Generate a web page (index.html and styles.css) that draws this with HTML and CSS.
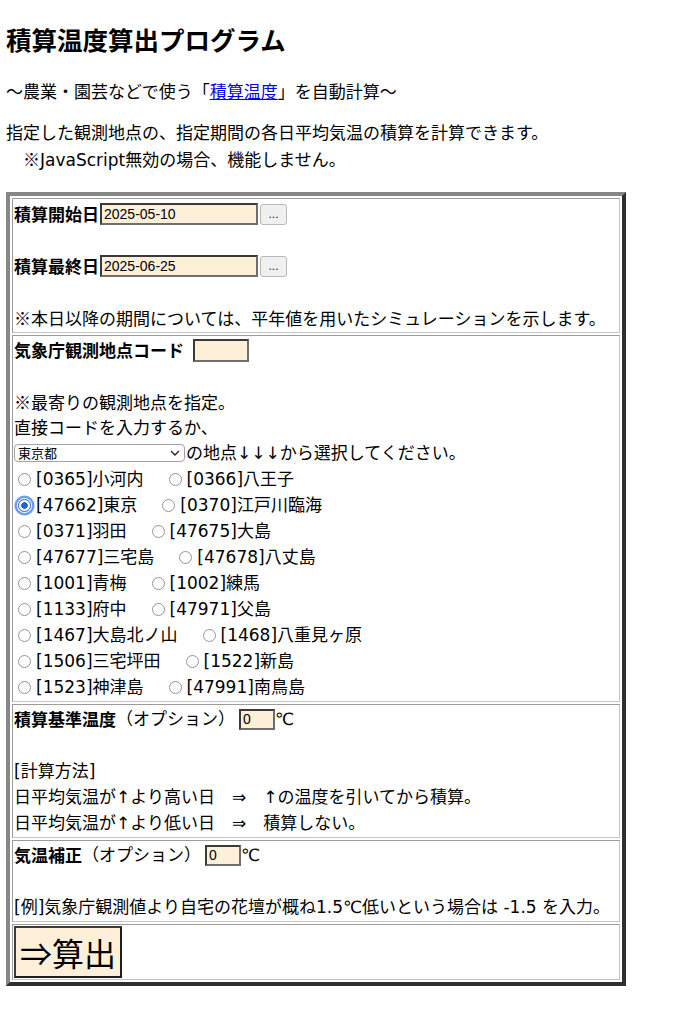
FILE: index.html
```html
<!DOCTYPE html>
<html lang="ja">
<head>
<meta charset="utf-8">
<title>積算温度算出プログラム</title>
<link rel="stylesheet" href="styles.css">
</head>
<body>
<h2 class="title">積算温度算出プログラム</h2>
<p class="sub">～農業・園芸などで使う「<a href="#">積算温度</a>」を自動計算～</p>
<p class="desc">指定した観測地点の、指定期間の各日平均気温の積算を計算できます。<br>　<span class="mark">※</span>JavaScript無効の場合、機能しません。</p>
<table class="calc">
<tr><td class="dates">
  <div class="ln"><b>積算開始日</b><input class="date" type="text" value="2025-05-10"><button class="pick" type="button">...</button></div>
  <div class="sp"></div>
  <div class="ln"><b>積算最終日</b><input class="date" type="text" value="2025-06-25"><button class="pick" type="button">...</button></div>
  <div class="sp"></div>
  <div class="tx"><span class="mark">※</span>本日以降の期間については、平年値を用いたシミュレーションを示します。</div>
</td></tr>
<tr><td>
  <div class="ln"><b>気象庁観測地点コード</b><input class="code" type="text" value=""></div>
  <div class="sp"></div>
  <div class="tx"><span class="mark">※</span>最寄りの観測地点を指定。</div>
  <div class="tx short">直接コードを入力するか、</div>
  <div class="ln"><span class="sel"><select class="pref"><option>東京都</option></select><svg class="chev" width="10" height="6" viewBox="0 0 10 6"><path d="M1 1l4 4 4-4" fill="none" stroke="#222" stroke-width="1.3"/></svg></span>の地点↓↓↓から選択してください。</div>
  <div class="opts"><label class="opt"><input type="radio" name="pt">[0365]小河内</label><label class="opt"><input type="radio" name="pt">[0366]八王子</label></div>
  <div class="opts"><label class="opt"><input type="radio" name="pt" checked class="focus">[47662]東京</label><label class="opt"><input type="radio" name="pt">[0370]江戸川臨海</label></div>
  <div class="opts"><label class="opt"><input type="radio" name="pt">[0371]羽田</label><label class="opt"><input type="radio" name="pt">[47675]大島</label></div>
  <div class="opts"><label class="opt"><input type="radio" name="pt">[47677]三宅島</label><label class="opt"><input type="radio" name="pt">[47678]八丈島</label></div>
  <div class="opts"><label class="opt"><input type="radio" name="pt">[1001]青梅</label><label class="opt"><input type="radio" name="pt">[1002]練馬</label></div>
  <div class="opts"><label class="opt"><input type="radio" name="pt">[1133]府中</label><label class="opt"><input type="radio" name="pt">[47971]父島</label></div>
  <div class="opts"><label class="opt"><input type="radio" name="pt">[1467]大島北ノ山</label><label class="opt"><input type="radio" name="pt">[1468]八重見ヶ原</label></div>
  <div class="opts"><label class="opt"><input type="radio" name="pt">[1506]三宅坪田</label><label class="opt"><input type="radio" name="pt">[1522]新島</label></div>
  <div class="opts"><label class="opt"><input type="radio" name="pt">[1523]神津島</label><label class="opt"><input type="radio" name="pt">[47991]南鳥島</label></div>
</td></tr>
<tr><td>
  <div class="ln"><b>積算基準温度</b>（オプション）<input class="num" type="text" value="0">℃</div>
  <div class="sp"></div>
  <div class="tx">[計算方法]</div>
  <div class="tx">日平均気温が↑より高い日　⇒　↑の温度を引いてから積算。</div>
  <div class="tx">日平均気温が↑より低い日　⇒　積算しない。</div>
</td></tr>
<tr><td>
  <div class="ln"><b>気温補正</b>（オプション）<input class="num" type="text" value="0">℃</div>
  <div class="sp"></div>
  <div class="tx">[例]気象庁観測値より自宅の花壇が概ね1.5℃低いという場合は -1.5 を入力。</div>
</td></tr>
<tr><td>
  <button class="go" type="button">⇒算出</button>
</td></tr>
</table>
</body>
</html>
```

FILE: styles.css
```css
html { background: #fff; }
body {
  margin: 8px 6px;
  font-family: "DejaVu Sans", "Noto Sans CJK JP", sans-serif;
  font-size: 17px;
  line-height: 26px;
  color: #000;
}
.title {
  font-family: "Noto Sans CJK JP", sans-serif;
  font-size: 25.5px;
  font-weight: bold;
  line-height: 37px;
  margin: 12px 0 22px;
}
.sub { margin: 0; }
.sub a { color: #0000ee; text-decoration: underline; }
.desc { margin: 15px 0 19px; }
.mark { font-family: "Noto Sans CJK JP", sans-serif; }
b { font-family: "Noto Sans CJK JP", sans-serif; font-weight: bold; }

.calc {
  width: 620px;
  border-collapse: separate;
  border-spacing: 2px;
  border: 4px solid;
  border-color: #878787 #2f2f2f #2f2f2f #878787;
}
.calc td {
  padding: 1px;
  vertical-align: top;
  border: 1px solid;
  border-color: #9c9c9c #c4c4c4 #c4c4c4 #9c9c9c;
  white-space: nowrap;
}
.calc td.dates { padding-top: 2px; }

.ln {
  display: flex;
  align-items: center;
  height: 26px;
}
.tx { height: 26px; }
.tx.short { height: 25px; }
.sp { height: 26px; }

.date, .code, .num {
  box-sizing: border-box;
  margin: 0;
  padding: 0 2px;
  font-family: "Liberation Sans", sans-serif;
  font-size: 14px;
  color: #000;
  background: #feefd8;
  border: 2px solid;
  border-color: #3a3a3a #6e6e6e #6e6e6e #3a3a3a;
  border-radius: 0;
  outline: none;
}
.date { width: 158px; height: 22px; margin-left: 1px; }
.code { width: 56px; height: 23px; margin-left: 9px; }
.num { width: 36px; height: 21px; margin-left: 4px; }

.pick {
  box-sizing: border-box;
  width: 27px;
  height: 21px;
  margin: 0 0 0 2px;
  padding: 0;
  font-family: "Liberation Sans", sans-serif;
  font-size: 12px;
  line-height: 19px;
  color: #222;
  background: #f0f0f0;
  border: 1px solid #b8b8b8;
  border-radius: 3px;
}

.sel {
  position: relative;
  display: inline-flex;
  margin-right: 1px;
}
.pref {
  appearance: none;
  -webkit-appearance: none;
  box-sizing: border-box;
  width: 171px;
  height: 18px;
  margin: 0;
  padding: 0 0 0 3px;
  font-family: "Noto Sans CJK JP", sans-serif;
  font-size: 13px;
  line-height: 16px;
  color: #000;
  background: #fff;
  border: 1px solid #a3a3a3;
  border-radius: 4px;
}
.chev {
  position: absolute;
  right: 5px;
  top: 6px;
  pointer-events: none;
}

.opts {
  display: flex;
  align-items: center;
  height: 26px;
}
.opt {
  display: flex;
  align-items: center;
}
.opt + .opt { margin-left: 21px; }
.opt input {
  appearance: none;
  -webkit-appearance: none;
  box-sizing: border-box;
  width: 13px;
  height: 13px;
  margin: 0 5px 0 4px;
  border: 1px solid #959595;
  border-radius: 50%;
  background: #fff;
}
.opt input.focus {
  border: 1.5px solid #1c64e0;
  background: radial-gradient(circle, #1c64e0 0 3px, #fff 3.6px);
  box-shadow: 0 0 0 1px #fff, 0 0 0 3.5px #6d9df0;
}

.go {
  box-sizing: border-box;
  display: block;
  height: 52px;
  margin: 0;
  padding: 0 4px;
  font-family: "Noto Sans CJK JP", sans-serif;
  font-size: 32px;
  line-height: 46px;
  color: #000;
  background: #feefd8;
  border: 2px solid;
  border-color: #3c3c3c #1f1f1f #1f1f1f #3c3c3c;
  border-radius: 0;
}
```
